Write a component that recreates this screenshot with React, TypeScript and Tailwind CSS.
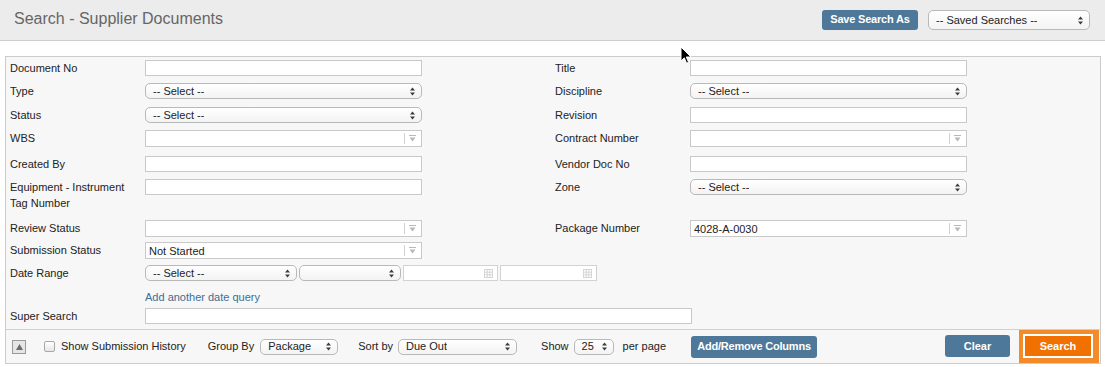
import React from "react";

// small macOS-style up/down arrows used in the select boxes
function Arrows() {
  return (
    <svg width="5" height="9" viewBox="0 0 5 9" className="shrink-0">
      <path d="M2.5 0.5L5 3.6H0Z" fill="#3c3c3c" />
      <path d="M2.5 8.5L0 5.4H5Z" fill="#3c3c3c" />
    </svg>
  );
}

function Select({ value = "", w, h = "h-[16px]" }: { value?: string; w: string; h?: string }) {
  return (
    <div
      className={`${w} ${h} shrink-0 flex items-center justify-between pl-[7px] pr-[6px] rounded-[5px] border border-[#b9b9b9] bg-linear-to-b from-white to-[#f3f3f3] text-[11px] text-[#222]`}
    >
      <span className="truncate">{value}</span>
      <Arrows />
    </div>
  );
}

function TextInput({ w = "w-[277px]", value = "" }: { w?: string; value?: string }) {
  return (
    <div className={`${w} h-[16px] shrink-0 border border-[#c9c9c9] bg-white text-[11px] leading-[14px] pl-[3px] text-[#222]`}>
      {value}
    </div>
  );
}

// autocomplete box with the little filter/down glyph on the right
function Combo({ value = "" }: { value?: string }) {
  return (
    <div className="w-[277px] h-[17px] shrink-0 flex items-center border border-[#c9c9c9] bg-white text-[11px] text-[#222]">
      <span className="flex-1 pl-[3px] leading-[14px]">{value}</span>
      <span className="h-[11px] w-px bg-[#d0d0d0]" />
      <svg width="16" height="9" viewBox="0 0 16 9" className="shrink-0">
        <path d="M4 1.5H11" stroke="#b8b8b8" strokeWidth="1" />
        <path d="M4.5 3.5H10.5L7.5 7.5Z" fill="#b8b8b8" />
      </svg>
    </div>
  );
}

function DateInput({ w }: { w: string }) {
  return (
    <div className={`${w} h-[16px] shrink-0 flex items-center justify-end pr-[4px] border border-[#d2d2d2] bg-white`}>
      <svg width="9" height="9" viewBox="0 0 9 9">
        <rect x="0.5" y="0.5" width="8" height="8" fill="none" stroke="#d6d6d6" />
        <path d="M3.2 0.5V8.5M5.8 0.5V8.5M0.5 3.2H8.5M0.5 5.8H8.5" stroke="#d6d6d6" />
      </svg>
    </div>
  );
}

function Field({ label, children, w = "w-[545px]" }: { label: string; children?: React.ReactNode; w?: string }) {
  return (
    <div className={`${w} shrink-0 flex items-start`}>
      <div className="w-[135px] shrink-0 pr-[10px] leading-[16px] text-[#222]">{label}</div>
      {children}
    </div>
  );
}

function BlueButton({ children, cls }: { children: React.ReactNode; cls: string }) {
  return (
    <button className={`${cls} shrink-0 rounded-[3px] bg-[#4d7899] text-white font-bold text-[11px] flex items-center justify-center`}>
      {children}
    </button>
  );
}

export default function App() {
  return (
    <div className="relative w-[1105px] h-[367px] bg-white font-['Liberation_Sans',Arial,sans-serif] text-[11px] text-[#222] overflow-hidden">
      <header className="h-[41px] bg-[#ececec] border-b border-[#cdcdcd] flex items-center pl-[14px] pr-[15px]">
        <h1 className="text-[16px] text-[#666] leading-[20px] -mt-[2px]">Search - Supplier Documents</h1>
        <div className="ml-auto flex items-center gap-[10px]">
          <BlueButton cls="w-[96px] h-[20px] -mt-[1px] tracking-[-0.2px]">Save Search As</BlueButton>
          <Select value="-- Saved Searches --" w="w-[162px]" h="h-[20px]" />
        </div>
      </header>

      <div className="mt-[15px] ml-[5px] w-[1096px] border border-[#cccccc] bg-[#f7f7f7]">
        <div className="pl-[4px] pt-[3px] pb-[5px]">
          <div className="h-[23px] flex">
            <Field label="Document No"><TextInput /></Field>
            <Field label="Title"><TextInput /></Field>
          </div>
          <div className="h-[24px] flex">
            <Field label="Type"><Select value="-- Select --" w="w-[277px]" /></Field>
            <Field label="Discipline"><Select value="-- Select --" w="w-[277px]" /></Field>
          </div>
          <div className="h-[23px] flex">
            <Field label="Status"><Select value="-- Select --" w="w-[277px]" /></Field>
            <Field label="Revision"><TextInput /></Field>
          </div>
          <div className="h-[26px] flex">
            <Field label="WBS"><Combo /></Field>
            <Field label="Contract Number"><Combo /></Field>
          </div>
          <div className="h-[23px] flex">
            <Field label="Created By"><TextInput /></Field>
            <Field label="Vendor Doc No"><TextInput /></Field>
          </div>
          <div className="h-[41px] flex">
            <Field label="Equipment - Instrument Tag Number"><TextInput /></Field>
            <Field label="Zone"><Select value="-- Select --" w="w-[277px]" /></Field>
          </div>
          <div className="h-[22px] flex">
            <Field label="Review Status"><Combo /></Field>
            <Field label="Package Number"><Combo value="4028-A-0030" /></Field>
          </div>
          <div className="h-[23px] flex">
            <Field label="Submission Status"><Combo value="Not Started" /></Field>
          </div>
          <div className="h-[24px] flex">
            <Field label="Date Range">
              <div className="flex gap-[2px]">
                <Select value="-- Select --" w="w-[152px]" />
                <Select w="w-[102px]" />
                <DateInput w="w-[95px]" />
                <DateInput w="w-[97px]" />
              </div>
            </Field>
          </div>
          <div className="h-[19px] pl-[135px]">
            <a className="text-[#3b6e95] leading-[14px]">Add another date query</a>
          </div>
          <div className="h-[16px] flex">
            <Field label="Super Search" w="w-[700px]"><TextInput w="w-[547px]" /></Field>
          </div>
        </div>

        <div className="h-[34px] border-t border-[#d0d0d0] flex items-stretch pl-[6px] pr-[1px]">
          <div className="flex items-center">
            <div className="w-[14px] h-[14px] border border-[#9a9a9a] bg-[#e6e6e6] flex items-center justify-center">
              <svg width="7" height="6" viewBox="0 0 7 6"><path d="M3.5 0L7 6H0Z" fill="#6b6b6b" /></svg>
            </div>
            <div className="ml-[18px] w-[11px] h-[11px] rounded-[2px] border border-[#a8a8a8] bg-linear-to-b from-white to-[#e6e6e6]" />
            <span className="ml-[6px]">Show Submission History</span>
            <span className="ml-[22px]">Group By</span>
            <span className="ml-[6px]"><Select value="Package" w="w-[78px]" /></span>
            <span className="ml-[20px]">Sort by</span>
            <span className="ml-[5px]"><Select value="Due Out" w="w-[119px]" /></span>
            <span className="ml-[24px]">Show</span>
            <span className="ml-[5px]"><Select value="25" w="w-[40px]" /></span>
            <span className="ml-[9px]">per page</span>
            <BlueButton cls="ml-[25px] w-[126px] h-[22px] tracking-[-0.2px]">Add/Remove Columns</BlueButton>
          </div>
          <div className="ml-auto flex items-center">
            <BlueButton cls="w-[65px] h-[22px] -mt-[1px]">Clear</BlueButton>
            <div className="ml-[9px] w-[80px] self-stretch bg-[#f28b2a] pl-[4px] pt-[4px]">
              <button className="w-[70px] h-[24px] border-2 border-white bg-[#f07000] text-white font-bold text-[11px] flex items-center justify-center">
                Search
              </button>
            </div>
          </div>
        </div>
      </div>

      {/* mouse pointer captured in the screenshot */}
      <svg className="absolute left-[680px] top-[46px]" width="12" height="19" viewBox="0 0 12 19">
        <path d="M1 1V15L4.3 11.8L6.6 17.2L8.6 16.3L6.3 11H11Z" fill="#000" stroke="#fff" strokeWidth="1" />
      </svg>
    </div>
  );
}
